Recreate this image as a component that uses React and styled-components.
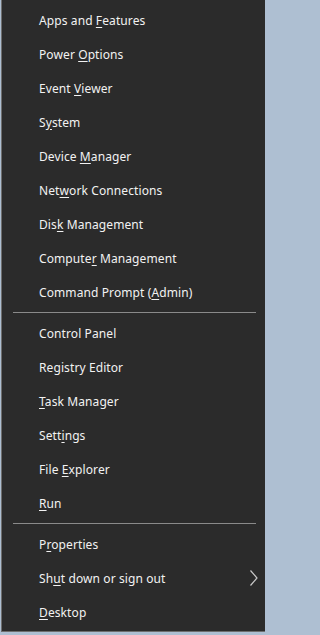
import React from "react";
import styled, { createGlobalStyle } from "styled-components";

const GlobalStyle = createGlobalStyle`
  html, body {
    margin: 0;
    padding: 0;
    background: #aebfd2;
  }
  body {
    font-family: "Noto Sans", "Open Sans", sans-serif;
  }
`;

const Menu = styled.div`
  width: 264px;
  box-sizing: border-box;
  background: #2b2b2b;
  border-left: 1px solid #6e6e6e;
  border-bottom: 1px solid #6e6e6e;
  margin-left: 1px;
  padding-top: 3px;
  padding-bottom: 2px;
  display: flex;
  flex-direction: column;
`;

const Item = styled.div`
  height: 34px;
  display: flex;
  align-items: center;
  justify-content: space-between;
  padding-left: 37px;
  padding-right: 6px;
  color: #f2f2f2;
  font-size: 12px;
  letter-spacing: 0.1px;
  box-sizing: border-box;
`;

const Key = styled.span`
  text-decoration: underline;
  text-underline-offset: 2px;
`;

const Separator = styled.div`
  height: 1px;
  background: #8a8a8a;
  margin: 3px 9px 3px 11px;
`;

const Chevron = () => (
  <svg width="10" height="18" viewBox="0 0 10 18">
    <path d="M1.5 1.5 L8 9 L1.5 16.5" fill="none" stroke="#c8c8c8" strokeWidth="1.2" />
  </svg>
);

const label = (text, key) => {
  if (key == null) return text;
  return (
    <>
      {text.slice(0, key)}
      <Key>{text[key]}</Key>
      {text.slice(key + 1)}
    </>
  );
};

const groups = [
  [
    ["Apps and Features", 9],
    ["Power Options", 6],
    ["Event Viewer", 6],
    ["System", 1],
    ["Device Manager", 7],
    ["Network Connections", 3],
    ["Disk Management", 3],
    ["Computer Management", 7],
    ["Command Prompt (Admin)", 16],
  ],
  [
    ["Control Panel", null],
    ["Registry Editor", null],
    ["Task Manager", 0],
    ["Settings", 4],
    ["File Explorer", 5],
    ["Run", 0],
  ],
  [
    ["Properties", 1],
    ["Shut down or sign out", 2, true],
    ["Desktop", 0],
  ],
];

export default function App() {
  return (
    <>
      <GlobalStyle />
      <Menu>
        {groups.map((group, gi) => (
          <React.Fragment key={gi}>
            {gi > 0 && <Separator />}
            {group.map(([text, key, sub]) => (
              <Item key={text}>
                <span>{label(text, key)}</span>
                {sub && <Chevron />}
              </Item>
            ))}
          </React.Fragment>
        ))}
      </Menu>
    </>
  );
}
